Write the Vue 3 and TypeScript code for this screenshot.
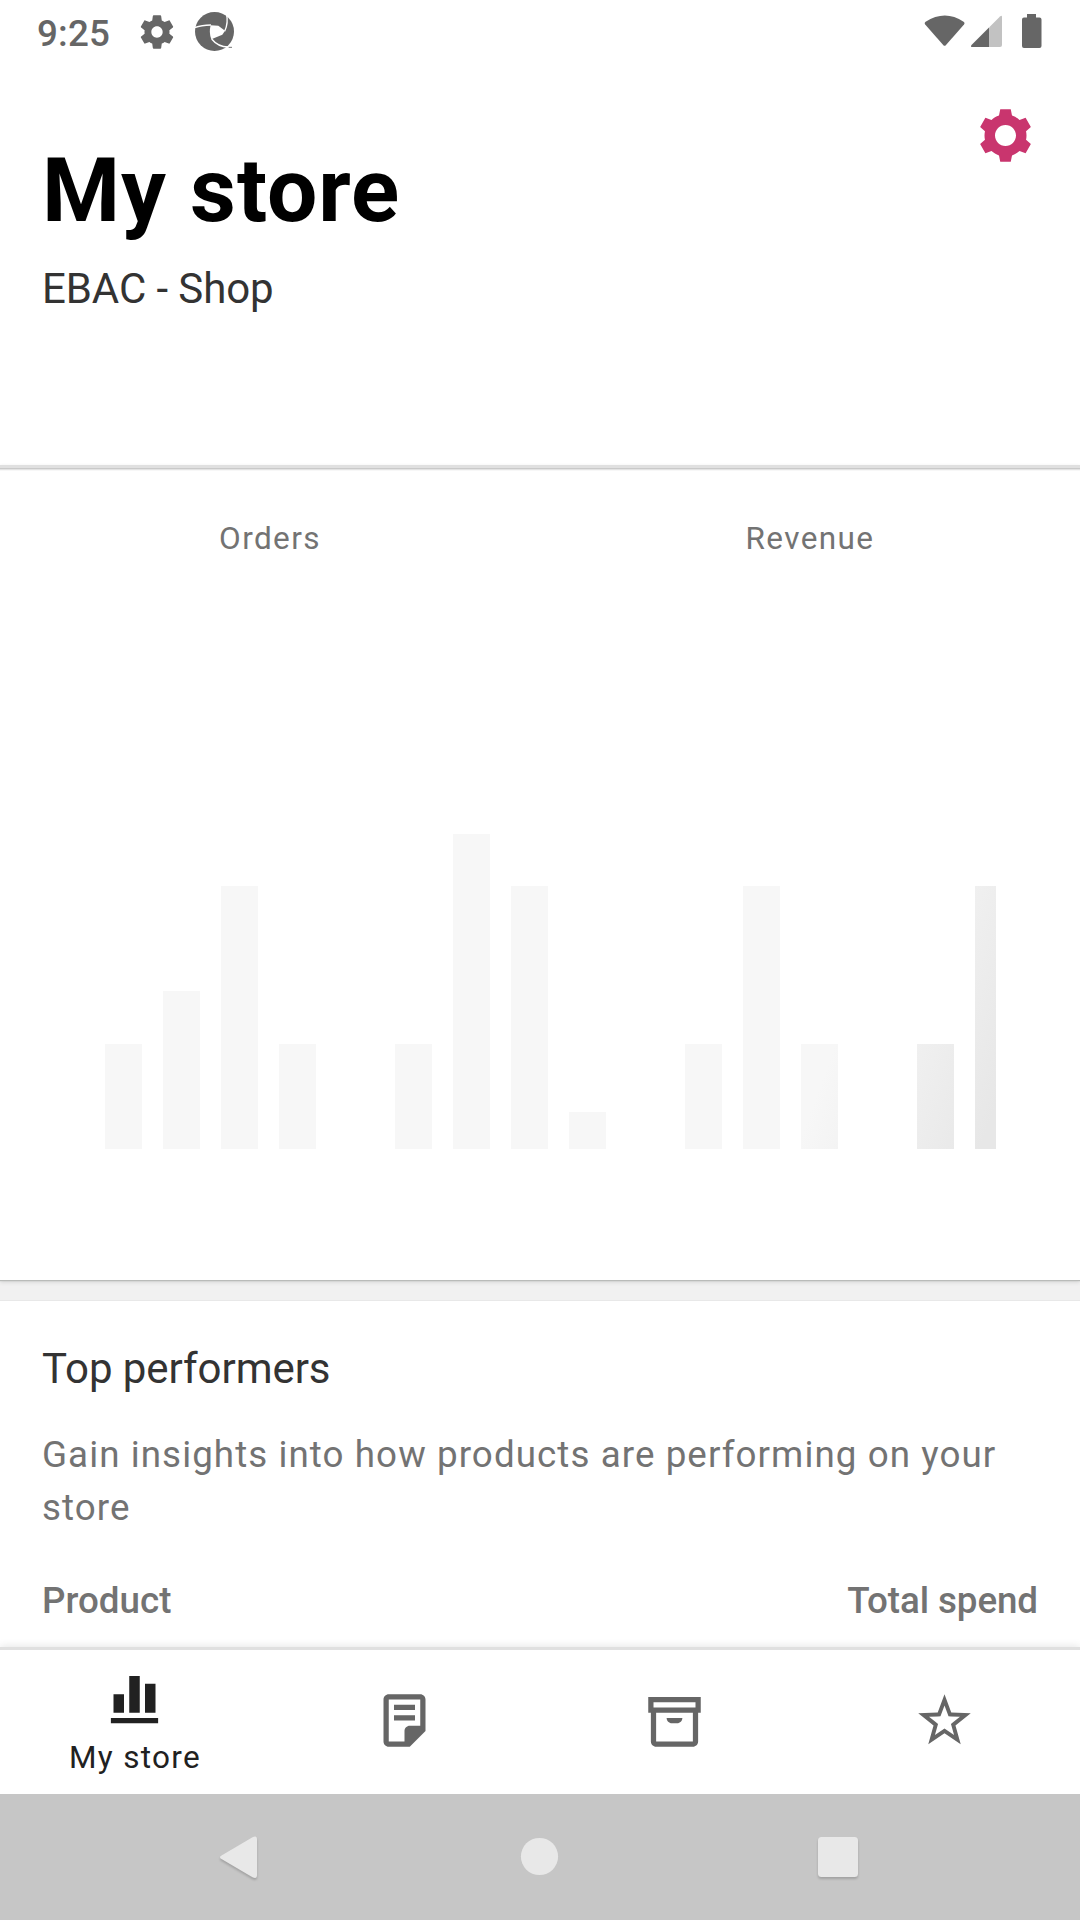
<script setup lang="ts">
interface Bar {
  x: number
  top: number
  width: number
}

interface NavItem {
  id: string
  label?: string
  path: string
}

const chartTop = 600
const baseline = 1149

const bars: Bar[] = [
  { x: 105, top: 1044, width: 37 },
  { x: 163, top: 991, width: 37 },
  { x: 221, top: 886, width: 37 },
  { x: 279, top: 1044, width: 37 },
  { x: 395, top: 1044, width: 37 },
  { x: 453, top: 834, width: 37 },
  { x: 511, top: 886, width: 37 },
  { x: 569, top: 1112, width: 37 },
  { x: 685, top: 1044, width: 37 },
  { x: 743, top: 886, width: 37 },
  { x: 801, top: 1044, width: 37 },
  { x: 917, top: 1044, width: 37 },
  { x: 975, top: 886, width: 21 },
]

const navItems: NavItem[] = [
  {
    id: 'store',
    label: 'My store',
    path: 'M3 19h18v2H3zM4 10h4v7H4zM10 3h4v14h-4zM16 6h4v11h-4z',
  },
  {
    id: 'orders',
    path: 'M16 8H8V6h8v2zm0 2H8v2h8v-2zm4-6v12l-6 6H6c-1.1 0-2-.9-2-2V4c0-1.1.9-2 2-2h12c1.1 0 2 .9 2 2zm-2 10V4H6v16h6v-4c0-1.1.9-2 2-2h4z',
  },
  {
    id: 'products',
    path: 'M22 3H2v6h1v11c0 1.1.9 2 2 2h14c1.1 0 2-.9 2-2V9h1V3zM4 5h16v2H4V5zm15 15H5V9h14v11zM9 11h6c0 1.1-.9 2-2 2h-2c-1.1 0-2-.9-2-2z',
  },
  {
    id: 'reviews',
    path: 'M12 6.308l1.176 3.167.347.936.997.042 3.374.14-2.647 2.09-.784.62.27.963.91 3.25-2.813-1.872-.83-.553-.83.552-2.814 1.87.91-3.248.27-.962-.783-.62-2.648-2.092 3.374-.14.996-.04.347-.936L12 6.308M12 2L9.418 8.953 2 9.257l5.822 4.602L5.82 21 12 16.89 18.18 21l-2.002-7.14L22 9.256l-7.418-.305L12 2z',
  },
]
</script>

<template>
  <div class="screen">
    <div class="status">
      <div class="status-left">
        <span class="clock">9:25</span>
        <svg class="status-gear" viewBox="0 0 24 24">
          <path d="M19.43 12.98c.04-.32.07-.64.07-.98s-.03-.66-.07-.98l2.11-1.65c.19-.15.24-.42.12-.64l-2-3.46c-.12-.22-.39-.3-.61-.22l-2.49 1c-.52-.4-1.080-.73-1.69-.98l-.38-2.65C14.460 2.180 14.250 2 14 2h-4c-.25 0-.46.18-.49.42l-.38 2.65c-.61.25-1.170.59-1.690.98l-2.490-1c-.23-.09-.49 0-.61.22l-2 3.460c-.13.22-.07.49.12.64l2.110 1.650c-.04.32-.07.65-.07.98s.03.66.07.98l-2.110 1.650c-.19.15-.24.42-.12.64l2 3.460c.12.22.39.3.61.22l2.490-1c.52.4 1.080.73 1.690.98l.38 2.650c.03.24.24.42.49.42h4c.25 0 .46-.18.49-.42l.38-2.650c.61-.25 1.170-.59 1.690-.98l2.490 1c.23.09.49 0 .61-.22l2-3.460c.12-.22.07-.49-.12-.64l-2.110-1.650zM12 15.400c-1.880 0-3.400-1.520-3.400-3.400s1.520-3.400 3.400-3.400 3.400 1.520 3.400 3.400-1.520 3.400-3.400 3.400z" />
        </svg>
        <svg class="status-swirl" viewBox="585 36 117 117">
          <circle cx="643.5" cy="94.5" r="58.5" fill="#666" />
          <path d="M632 76L655 77L675 92L667 104L634 118Q626 98 632 76Z" fill="#fff" />
          <g fill="none" stroke="#fff" stroke-width="4">
            <path d="M582 84Q602 75 633 75" />
            <path d="M679 40Q686 68 674 94" />
            <path d="M698 140Q658 146 635 117" />
          </g>
          <path d="M686 142h10" stroke="#777" stroke-width="3" />
        </svg>
      </div>
      <svg class="status-right" viewBox="0 0 120 40" fill="#666">
        <path d="M1.2 10.4Q0 9 1.6 7.7Q21 -4.6 39.6 7.7Q41.2 9 40 10.4L21.8 31.2Q20.6 32.4 19.4 31.2Z" />
        <path d="M76 2.5Q78 1 78 3V31Q78 33 76 33H65V13.4Z" fill="#c2c2c2" />
        <path d="M65 13.4V33H48.5Q46 33 47.5 31Z" />
        <path d="M103 0h9v3.6h3.5q2 0 2 2v26.4q0 2-2 2h-15.500q-2 0-2-2V5.600q0-2 2-2h3z" />
      </svg>
    </div>

    <header class="header">
      <div class="titles">
        <h1>My store</h1>
        <p>EBAC - Shop</p>
      </div>
      <svg class="cog" viewBox="0 0 24 24">
        <path d="M20 12c0-.568-.06-1.122-.174-1.656l1.834-1.612-2-3.464-2.322.786c-.82-.736-1.787-1.308-2.86-1.657L14 2h-4l-.48 2.396c-1.07.35-2.04.92-2.858 1.657L4.34 5.268l-2 3.464 1.834 1.612C4.06 10.878 4 11.432 4 12s.06 1.122.174 1.656L2.34 15.268l2 3.464 2.322-.786c.82.736 1.787 1.308 2.86 1.657L10 22h4l.48-2.396c1.07-.35 2.038-.92 2.858-1.657l2.322.786 2-3.464-1.834-1.613c.113-.535.174-1.09.174-1.656zm-8 4c-2.21 0-4-1.79-4-4s1.79-4 4-4 4 1.79 4 4-1.79 4-4 4z" />
      </svg>
    </header>

    <section class="stats">
      <div class="tabs">
        <span>Orders</span>
        <span>Revenue</span>
      </div>
      <svg class="chart" :viewBox="`0 ${chartTop} 1080 600`">
        <defs>
          <linearGradient id="shimmer" gradientUnits="userSpaceOnUse" x1="835" y1="1044" x2="997" y2="1103">
            <stop offset="0" stop-color="#f7f7f7" />
            <stop offset="1" stop-color="#e7e7e7" />
          </linearGradient>
        </defs>
        <rect
          v-for="bar in bars"
          :key="bar.x"
          :x="bar.x"
          :y="bar.top"
          :width="bar.width"
          :height="baseline - bar.top"
          fill="url(#shimmer)"
        />
      </svg>
    </section>

    <section class="performers">
      <h2>Top performers</h2>
      <p>Gain insights into how products are performing on your store</p>
      <div class="columns">
        <span>Product</span>
        <span class="spend">Total spend</span>
      </div>
    </section>

    <nav class="nav">
      <div v-for="item in navItems" :key="item.id" class="nav-item" :class="{ active: item.label }">
        <svg viewBox="0 0 24 24"><path :d="item.path" fill-rule="evenodd" /></svg>
        <span v-if="item.label">{{ item.label }}</span>
      </div>
    </nav>

    <div class="system">
      <svg viewBox="0 0 44 48">
        <path class="cast" d="M3.500 22.500L34.500 4.300Q39 2 39 6.500V42Q39 46.500 34.500 44.200L3.500 26Q.5 24.200 3.500 22.500Z" />
      </svg>
      <svg viewBox="0 0 44 48"><circle cx="22.500" cy="23.500" r="18.600" /></svg>
      <svg viewBox="0 0 44 48"><rect class="cast" x="2" y="4" width="40" height="40" rx="3.500" /></svg>
    </div>
  </div>
</template>

<style>
body {
  margin: 0;
}
</style>

<style scoped>
.screen {
  width: 1080px;
  height: 1920px;
  display: flex;
  flex-direction: column;
  overflow: hidden;
  background: #f1f1f1;
  font-family: Roboto, 'Liberation Sans', sans-serif;
}

h1,
h2,
p {
  margin: 0;
  font-weight: 400;
}

.status {
  height: 63px;
  flex: none;
  display: flex;
  justify-content: space-between;
  background: #fff;
  color: #666;
}

.status-left {
  display: flex;
  align-items: center;
  height: 63px;
  padding-left: 37px;
}

.clock {
  width: 100px;
  font-size: 36.75px;
  line-height: 44px;
  font-weight: 500;
  letter-spacing: 0.2px;
  padding-top: 4px;
}

.status-gear {
  width: 40px;
  height: 40px;
  fill: #666;
}

.status-swirl {
  width: 39px;
  height: 39px;
  margin-left: 18px;
}

.status-right {
  width: 120px;
  height: 40px;
  margin: 14px 36px 0 0;
}

.header {
  height: 402px;
  flex: none;
  box-sizing: border-box;
  display: flex;
  justify-content: space-between;
  padding: 41px 43px 0 42px;
  background: #fff;
}

.titles {
  padding-top: 35px;
}

h1 {
  font-size: 89.25px;
  line-height: 104px;
  font-weight: 700;
  letter-spacing: 0.95px;
  color: #000;
}

.titles p {
  margin-top: 21px;
  font-size: 42px;
  line-height: 50px;
  letter-spacing: -0.1px;
  color: #333;
}

.cog {
  width: 63px;
  height: 63px;
  fill: #c9356e;
}

.stats {
  height: 815px;
  flex: none;
  box-sizing: border-box;
  background: linear-gradient(#e0e0e0 0 3px, #c9c9c9 3px 4px, #e3e3e3 4px 5px, #f7f7f7 5px 6px, #fff 6px);
  box-shadow: 0 1px 1px #b9bbb9, 0 2px 4px #d0d0d0;
}

.tabs {
  display: flex;
  height: 135px;
}

.tabs span {
  flex: 1;
  padding-top: 54px;
  text-align: center;
  font-size: 31.5px;
  line-height: 40px;
  letter-spacing: 1.4px;
  color: #737373;
}

.chart {
  display: block;
  width: 1080px;
  height: 600px;
}

.performers {
  flex: 1;
  margin-top: 20px;
  border-top: 1px solid #e8e8e8;
  padding: 43px 42px 0;
  background: #fff;
}

h2 {
  font-size: 42px;
  line-height: 50px;
  letter-spacing: -0.05px;
  color: #333;
}

.performers p {
  margin-top: 33.5px;
  font-size: 36.75px;
  line-height: 53px;
  letter-spacing: 1.07px;
  color: #737373;
}

.columns {
  display: flex;
  justify-content: space-between;
  margin-top: 45px;
  font-size: 36.75px;
  line-height: 44px;
  font-weight: 500;
  color: #737373;
}

.spend {
  letter-spacing: -0.08px;
}

.nav {
  height: 147px;
  flex: none;
  box-sizing: border-box;
  display: flex;
  border-top: 3px solid #e0e0e0;
  background: #fff;
  box-shadow: 0 -1px 8px rgba(0, 0, 0, 0.1);
}

.nav-item {
  flex: 1;
  display: flex;
  flex-direction: column;
  align-items: center;
  padding-top: 39px;
  fill: #666;
}

.nav-item.active {
  padding-top: 18px;
  fill: #212121;
}

.nav-item svg {
  width: 63px;
  height: 63px;
  margin-right: 1px;
}

.nav-item span {
  margin-top: 7px;
  font-size: 31.5px;
  line-height: 40px;
  letter-spacing: 1.3px;
  color: #212121;
}

.system {
  height: 126px;
  flex: none;
  box-sizing: border-box;
  display: flex;
  justify-content: space-between;
  padding: 39px 220px 0 218px;
  background: #c6c6c6;
  z-index: 1;
}

.system svg {
  width: 44px;
  height: 48px;
  overflow: visible;
  fill: #e8e8e8;
}

.cast {
  filter: drop-shadow(0 2px 1px rgba(0, 0, 0, 0.18));
}
</style>
